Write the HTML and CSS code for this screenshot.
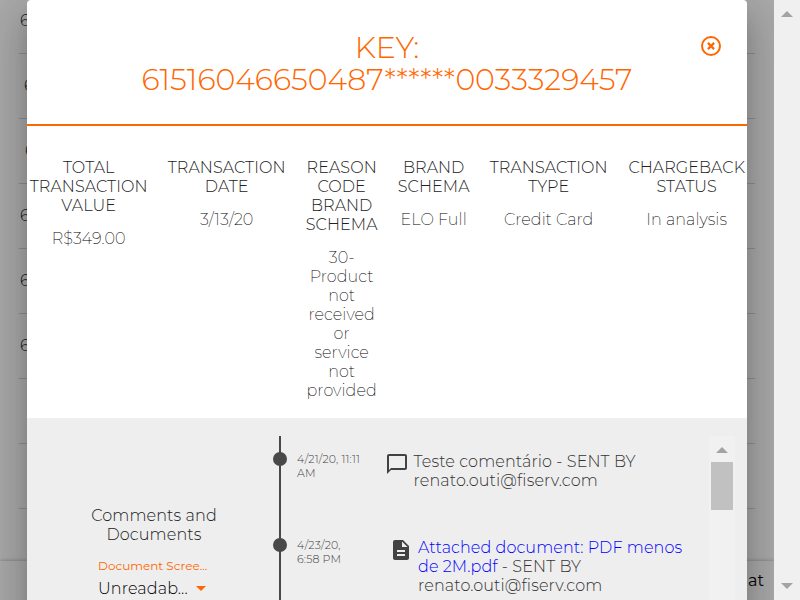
FILE: index.html
```html
<!DOCTYPE html>
<html lang="en">
<head>
<meta charset="utf-8">
<title>Chargeback details</title>
<link rel="stylesheet" href="styles.css">
</head>
<body>
<div class="page">
  <div class="rows">
    <div class="row">6</div>
    <div class="row in4">6</div>
    <div class="row in5">6</div>
    <div class="row">6</div>
    <div class="row">6</div>
    <div class="row">6</div>
    <div class="row"></div>
    <div class="row"></div>
  </div>
  <footer class="footer">at</footer>
</div>
<div class="overlay">
  <section class="dialog">
    <header class="head">
      <h1>KEY:<br>61516046650487******0033329457</h1>
      <svg class="close" viewBox="0 0 20 20"><circle cx="10" cy="10" r="9" fill="none" stroke="#ff6600" stroke-width="2"/><path d="M6.9 6.9l6.2 6.2M13.1 6.9l-6.2 6.2" stroke="#ff6600" stroke-width="2.2"/></svg>
    </header>
    <div class="facts">
      <dl class="wide"><dt>TOTAL TRANSACTION VALUE</dt><dd>R$349.00</dd></dl>
      <dl class="wide"><dt>TRANSACTION DATE</dt><dd>3/13/20</dd></dl>
      <dl><dt>REASON CODE BRAND SCHEMA</dt><dd>30-<br>Product<br>not<br>received<br>or<br>service<br>not<br>provided</dd></dl>
      <dl><dt>BRAND SCHEMA</dt><dd>ELO Full</dd></dl>
      <dl class="wide"><dt>TRANSACTION TYPE</dt><dd>Credit Card</dd></dl>
      <dl class="wide"><dt>CHARGEBACK STATUS</dt><dd>In analysis</dd></dl>
    </div>
    <div class="history">
      <div class="side">
        <h2>Comments and<br>Documents</h2>
        <div class="select">
          <div class="label">Document Scree...</div>
          <div class="value">Unreadab...<i class="caret"></i></div>
        </div>
      </div>
      <div class="timeline">
        <div class="event">
          <i class="dot"></i>
          <time>4/21/20, 11:11<br>AM</time>
          <svg class="icon comment" viewBox="0 0 24 24"><path d="M20 2H4c-1.1 0-1.990.9-1.990 2L2 22l4-4h14c1.100 0 2-.9 2-2V4c0-1.100-.9-2-2-2zm0 14H6l-2 2V4h16v12z"/></svg>
          <p>Teste comentário - SENT BY<br>renato.outi@fiserv.com</p>
        </div>
        <div class="event">
          <i class="dot"></i>
          <time>4/23/20,<br>6:58 PM</time>
          <svg class="icon doc" viewBox="0 0 24 24"><path d="M14 2H6c-1.100 0-1.990.9-1.990 2L4 20c0 1.100.89 2 1.990 2H18c1.100 0 2-.9 2-2V8l-6-6zm2 16H8v-2h8v2zm0-4H8v-2h8v2zm-3-5V3.500L18.500 9H13z"/></svg>
          <p><a>Attached document: PDF menos<br>de 2M.pdf</a> - SENT BY<br>renato.outi@fiserv.com</p>
        </div>
      </div>
      <div class="track"><i class="up"></i><i class="thumb"></i></div>
    </div>
  </section>
</div>
<div class="scrollbar"><i class="up"></i><i class="down"></i></div>
</body>
</html>
```
FILE: styles.css
```css
* { box-sizing: border-box; margin: 0; padding: 0; }
html, body { height: 600px; overflow: hidden; }
body {
  position: relative;
  display: flex;
  font: 300 16px/19px Montserrat, "Open Sans", sans-serif;
  color: #212121;
  background: #fafafa;
}
.page { width: 774px; height: 600px; display: flex; flex-direction: column; justify-content: space-between; }
.rows { margin: -11px 19px 0; }
.row { height: 65px; padding-left: 1px; line-height: 64px; border-bottom: 1px solid #d0d0d0; font-size: 16px; }
.row.in4 { padding-left: 5px; }
.row.in5 { padding-left: 6px; }
.footer { height: 39px; padding: 10px 10px; text-align: right; font-weight: 400; color: #000; background: #fafafa; box-shadow: 0 0 4px rgba(0,0,0,.3); }

.overlay {
  position: absolute;
  inset: 0 26px 0 0;
  padding: 0 27px;
  overflow: hidden;
  background: rgba(0,0,0,.32);
}
.dialog {
  height: 700px;
  border-radius: 4px;
  background: #fff;
  overflow: hidden;
  box-shadow: 0 11px 15px -7px rgba(0,0,0,.2), 0 24px 38px 3px rgba(0,0,0,.14), 0 9px 46px 8px rgba(0,0,0,.12);
}
.head { height: 126px; padding-top: 32px; position: relative; text-align: center; color: #f60; border-bottom: 2px solid #f60; }
.head h1 { font-size: 30px; line-height: 32px; font-weight: 300; }
.close { position: absolute; right: 26px; top: 36px; width: 20px; height: 20px; }

.facts { height: 292px; padding: 32px .8px 0 2.2px; display: flex; justify-content: space-between; text-align: center; letter-spacing: .08px; }
.facts dl { width: 73px; }
.facts .wide { width: 119px; }
.facts dd { margin-top: 14px; font-weight: 200; color: #000; }

.history { height: 282px; padding: 18px 12px 0 0; display: flex; background: #eee; letter-spacing: .12px; }
.side { width: 252px; padding-top: 70px; text-align: center; }
.side h2 { width: 254px; font-size: 16px; font-weight: 300; }
.select { margin: 12px 0 0 71px; text-align: left; }
.label { font-size: 12px; line-height: 19px; margin-bottom: 1px; font-weight: 400; letter-spacing: 0; color: #f60; }
.value { margin-top: 4px; display: flex; align-items: center; gap: 8px; color: #000; }
.caret { border: 5px solid transparent; border-top-color: #f60; border-bottom: 0; }

.timeline {
  width: 430px;
  margin-left: -6px;
  background: linear-gradient(#484848, #484848) 6px 0 / 2px 100% no-repeat;
  padding-top: 16px;
}
.event { height: 86px; display: flex; align-items: flex-start; color: #333; }
.dot { flex: none; width: 14px; height: 14px; border-radius: 50%; background: #484848; }
.event time { width: 88px; margin-left: 10px; font-size: 11px; line-height: 14px; letter-spacing: .17px; color: #444; }
.icon { flex: none; width: 24px; height: 24px; fill: #424242; }
.comment { margin: 0 5px 0 -.5px; }
.doc { margin: 0 5px 0 4px; }
a { color: #00f; letter-spacing: .09px; }
.track { width: 26px; margin-left: 6px; padding: 11px 2px 0; background: #f1f1f1; }
.up, .down { display: block; border: 6px solid transparent; }
.up { border-bottom-color: #a3a3a3; border-top: 0; }
.down { border-top-color: #a3a3a3; border-bottom: 0; }
.track .up { width: 12px; margin: 0 auto 9px; }
.thumb { display: block; height: 48px; background: #c1c1c1; }
.scrollbar { width: 26px; height: 600px; padding: 11px 7px; background: #f0f0f0; display: flex; flex-direction: column; justify-content: space-between; }
```
